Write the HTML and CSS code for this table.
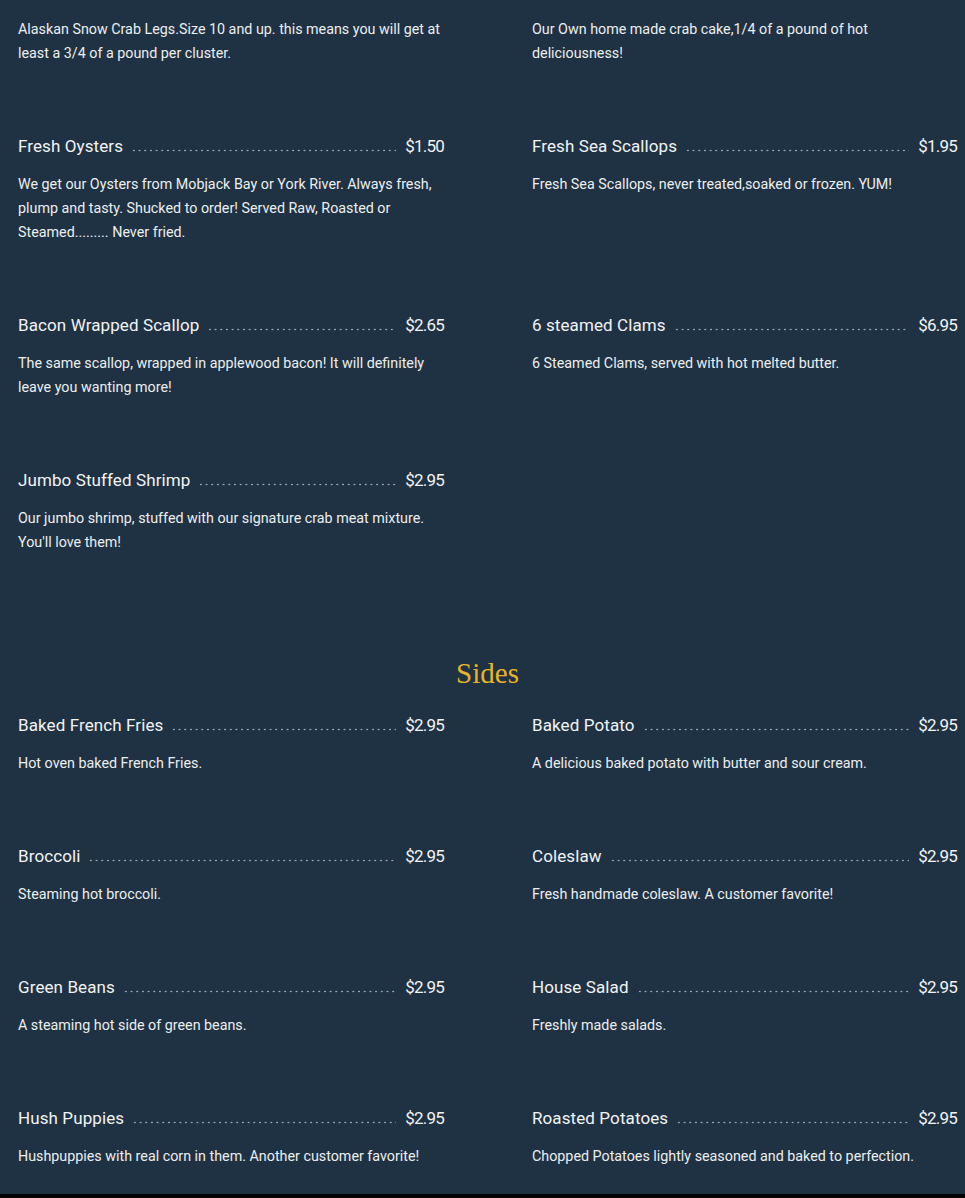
FILE: index.html
```html
<!DOCTYPE html>
<html>
<head>
<meta charset="utf-8">
<link rel="stylesheet" href="styles.css">
</head>
<body>
<main class="menu">
  <section class="section section-first">
    <div class="items">
      <div class="item">
        <div class="item-head"><span class="item-name">Alaskan Snow Crab Legs</span><span class="leader"></span><span class="item-price">$MP</span></div>
        <p class="item-desc">Alaskan Snow Crab Legs.Size 10 and up. this means you will get at least a 3/4 of a pound per cluster.</p>
      </div>
      <div class="item">
        <div class="item-head"><span class="item-name">Crab Cake</span><span class="leader"></span><span class="item-price">$9.95</span></div>
        <p class="item-desc">Our Own home made crab cake,1/4 of a pound of hot deliciousness!</p>
      </div>
      <div class="item">
        <div class="item-head"><span class="item-name">Fresh Oysters</span><span class="leader"></span><span class="item-price">$1.50</span></div>
        <p class="item-desc">We get our Oysters from Mobjack Bay or York River. Always fresh, plump and tasty. Shucked to order! Served Raw, Roasted or Steamed......... Never fried.</p>
      </div>
      <div class="item">
        <div class="item-head"><span class="item-name">Fresh Sea Scallops</span><span class="leader"></span><span class="item-price">$1.95</span></div>
        <p class="item-desc">Fresh Sea Scallops, never treated,soaked or frozen. YUM!</p>
      </div>
      <div class="item">
        <div class="item-head"><span class="item-name">Bacon Wrapped Scallop</span><span class="leader"></span><span class="item-price">$2.65</span></div>
        <p class="item-desc">The same scallop, wrapped in applewood bacon! It will definitely leave you wanting more!</p>
      </div>
      <div class="item">
        <div class="item-head"><span class="item-name">6 steamed Clams</span><span class="leader"></span><span class="item-price">$6.95</span></div>
        <p class="item-desc">6 Steamed Clams, served with hot melted butter.</p>
      </div>
      <div class="item">
        <div class="item-head"><span class="item-name">Jumbo Stuffed Shrimp</span><span class="leader"></span><span class="item-price">$2.95</span></div>
        <p class="item-desc">Our jumbo shrimp, stuffed with our signature crab meat mixture. You'll love them!</p>
      </div>
    </div>
  </section>
  <section class="section">
    <h2 class="section-title">Sides</h2>
    <div class="items">
      <div class="item">
        <div class="item-head"><span class="item-name">Baked French Fries</span><span class="leader"></span><span class="item-price">$2.95</span></div>
        <p class="item-desc">Hot oven baked French Fries.</p>
      </div>
      <div class="item">
        <div class="item-head"><span class="item-name">Baked Potato</span><span class="leader"></span><span class="item-price">$2.95</span></div>
        <p class="item-desc">A delicious baked potato with butter and sour cream.</p>
      </div>
      <div class="item">
        <div class="item-head"><span class="item-name">Broccoli</span><span class="leader"></span><span class="item-price">$2.95</span></div>
        <p class="item-desc">Steaming hot broccoli.</p>
      </div>
      <div class="item">
        <div class="item-head"><span class="item-name">Coleslaw</span><span class="leader"></span><span class="item-price">$2.95</span></div>
        <p class="item-desc">Fresh handmade coleslaw. A customer favorite!</p>
      </div>
      <div class="item">
        <div class="item-head"><span class="item-name">Green Beans</span><span class="leader"></span><span class="item-price">$2.95</span></div>
        <p class="item-desc">A steaming hot side of green beans.</p>
      </div>
      <div class="item">
        <div class="item-head"><span class="item-name">House Salad</span><span class="leader"></span><span class="item-price">$2.95</span></div>
        <p class="item-desc">Freshly made salads.</p>
      </div>
      <div class="item">
        <div class="item-head"><span class="item-name">Hush Puppies</span><span class="leader"></span><span class="item-price">$2.95</span></div>
        <p class="item-desc">Hushpuppies with real corn in them. Another customer favorite!</p>
      </div>
      <div class="item">
        <div class="item-head"><span class="item-name">Roasted Potatoes</span><span class="leader"></span><span class="item-price">$2.95</span></div>
        <p class="item-desc">Chopped Potatoes lightly seasoned and baked to perfection.</p>
      </div>
    </div>
  </section>
</main>
</body>
</html>
```

FILE: styles.css
```css
html, body {
  margin: 0;
  padding: 0;
  background: #000;
}
body {
  font-family: "Roboto", "Lato", sans-serif;
  color: #eef0f2;
  overflow: hidden;
}
.menu {
  background: #1f3243;
  margin-top: -23px;
  padding: 0 8px 0 18px;
}
.section {
  padding-bottom: 26px;
}
.section-title {
  margin: 75px 0 20px;
  font-family: "Liberation Serif", "Times New Roman", serif;
  font-weight: 400;
  font-size: 29px;
  line-height: 36px;
  color: #e6b42a;
  text-align: center;
}
.items {
  display: grid;
  grid-template-columns: 426px 425px;
  column-gap: 88px;
  row-gap: 67px;
  align-items: start;
}
.item-head {
  display: flex;
  align-items: baseline;
  height: 28px;
  line-height: 28px;
  font-size: 17px;
  letter-spacing: 0.1px;
  color: #f2f3f5;
}
.item-name {
  white-space: nowrap;
}
.leader {
  flex: 1;
  margin: 0 9px 0 8px;
  height: 3px;
  background-image: radial-gradient(circle, rgba(190, 200, 210, 0.8) 0.75px, transparent 1.15px);
  background-size: 5.7px 3px;
  background-repeat: repeat-x;
  background-position: left center;
}
.item-price {
  white-space: nowrap;
  letter-spacing: -0.8px;
}
.item-desc {
  margin: 12px 0 0;
  font-size: 14.3px;
  line-height: 24px;
  color: #eceef0;
}
```
